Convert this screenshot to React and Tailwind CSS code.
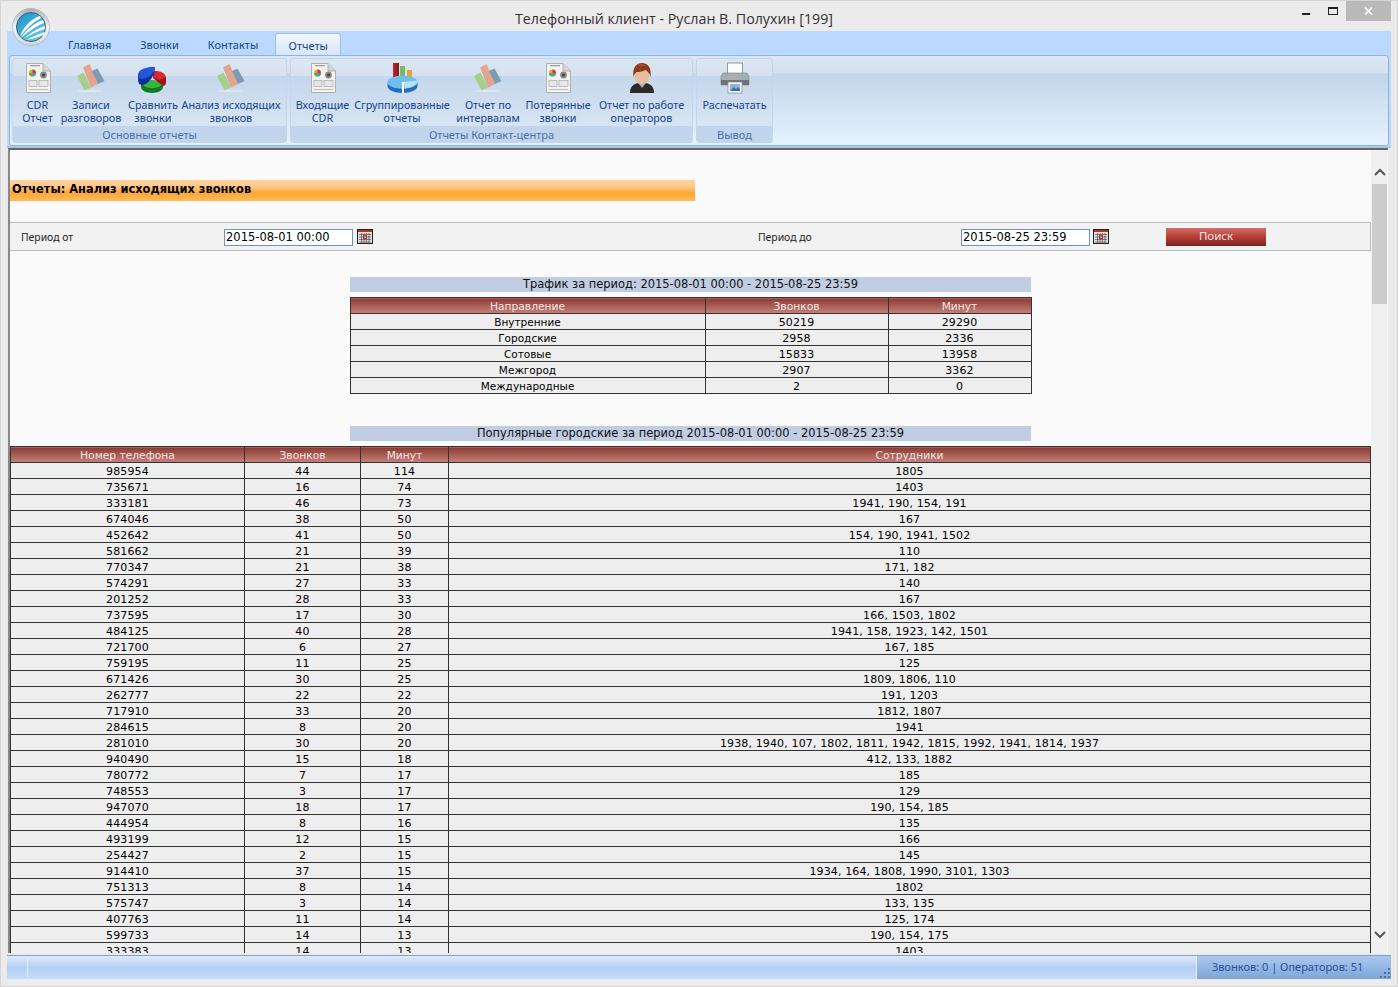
import React from "react";

const ribbonFont = { fontFamily: '"Noto Sans", sans-serif' };
const dejavu = { fontFamily: '"DejaVu Sans", sans-serif' };

function DocIcon() {
  return (
    <svg width="28" height="32" viewBox="0 0 28 32">
      <path d="M2.5 1.5H19L26.500 9V30.500H2.500Z" fill="#f2f2f0" stroke="#b0b0b0" />
      <path d="M19 1.500V9H26.500" fill="#d5d5d5" stroke="#b0b0b0" />
      <rect x="6" y="3" width="10" height="1.200" fill="#999" />
      <circle cx="8.500" cy="11" r="3.400" fill="#e8a43a" />
      <path d="M8.500 7.600a3.400 3.400 0 0 1 3.400 3.400H8.500Z" fill="#d33" />
      <path d="M8.500 11h3.400A3.400 3.400 0 0 1 8.500 14.400Z" fill="#2a9bd8" />
      <path d="M8.500 11v3.400A3.400 3.400 0 0 1 5.100 11Z" fill="#4fae4f" />
      <circle cx="19.500" cy="13" r="3.400" fill="#8a8a8a" />
      <circle cx="19.500" cy="13" r="1.600" fill="#444" />
      <rect x="5" y="18.500" width="8" height="6" fill="#e6e6e6" stroke="#aaa" strokeWidth="0.700" />
      <rect x="15" y="18.500" width="9" height="6" fill="#e6e6e6" stroke="#aaa" strokeWidth="0.700" />
      <rect x="5" y="27" width="19" height="1" fill="#bbb" />
    </svg>
  );
}

function BooksIcon() {
  return (
    <svg width="30" height="30" viewBox="0 0 30 30" className="mt-[1px]">
      <ellipse cx="14" cy="28" rx="13" ry="1" fill="#dfe7f0" />
      <path d="M1 13 7.500 9.500 15 24.500 8.500 27.500Z" fill="#a6cf8b" />
      <path d="M7 4.500 13.500 1 22 21 15 24.500Z" fill="#e3a490" />
      <path d="M16 8 21.500 5.500 28.500 18 22 21Z" fill="#7d9bb3" />
    </svg>
  );
}

function PieIcon() {
  return (
    <svg width="30" height="28" viewBox="0 0 30 28" className="mt-[4px] ml-[-3px]">
      <path d="M4 17v4c0 3 5 6 11 6s11-3 11-6v-4Z" fill="#0c7a20" />
      <path d="M4 17c3-2 7-3 11-3s8 1 11 3c-1 3-6 5-11 5S6 20 4 17Z" fill="#35b53f" />
      <path d="M16 12 V5c6 0 12 2 13 7v5c0 2-2 3-3 3Z" fill="#a50f17" />
      <path d="M16 11 18 5c6 0 10 2 11 6.500L22 14Z" fill="#d8272f" />
      <path d="M1 10c0 1 0 6 1 8l3 1c3 0 7-3 9-6l3-5 1-7C10 1 1 4 1 10Z" fill="#0f2f96" />
      <path d="M1 9c0 2 1 3 3 4 4 0 8-2 10-4l3-3 1-5C10 1 1 3 1 9Z" fill="#2058d8" />
    </svg>
  );
}

function GroupIcon() {
  return (
    <svg width="31" height="32" viewBox="0 0 31 32">
      <defs>
        <linearGradient id="redbar" x1="0" y1="0" x2="1" y2="0">
          <stop offset="0" stopColor="#c8232a" />
          <stop offset="1" stopColor="#7e1a1c" />
        </linearGradient>
      </defs>
      <rect x="6" y="1" width="6" height="14" fill="url(#redbar)" />
      <rect x="13" y="4" width="5" height="11" fill="#79b864" />
      <rect x="20" y="8" width="5" height="7" fill="#eca22c" />
      <ellipse cx="15.500" cy="20" rx="15" ry="6.500" fill="#6fbef0" />
      <path d="M.5 20v4c0 4 7 7 15 7s15-3 15-7v-4c0 4-7 6.500-15 6.500S.5 24 .5 20Z" fill="#1f6fbd" />
      <path d="M17 20 30 18.500c1 3-4 7-12 8Z" fill="#b9e0f7" />
      <path d="M15 20 17 20 17 31 15 31Z" fill="#fff" />
    </svg>
  );
}

function PersonIcon() {
  return (
    <svg width="26" height="32" viewBox="0 0 26 32">
      <path d="M1 31c0-6 3-9 8-10h8c5 1 8 4 8 10Z" fill="#2b2b2b" />
      <path d="M9 21l4 5 4-5Z" fill="#9fb0bf" />
      <ellipse cx="13" cy="14" rx="7.500" ry="8.500" fill="#e8bd9d" />
      <path d="M4.500 15C3 5 8 1 13 1s10 4 8.500 14c-1-4-3-6-5-7-4 2-8 2-9 2-1.500 1-2.500 3-3 5Z" fill="#8c3a1a" />
      <path d="M8 3c3-1.500 7-1 9 1-3 0-6 0-9-1Z" fill="#b4562a" />
    </svg>
  );
}

function PrinterIcon() {
  return (
    <svg width="30" height="32" viewBox="0 0 30 32">
      <rect x="7.500" y="1" width="15" height="11" fill="#fbfbfb" stroke="#9a9a9a" />
      <path d="M3 11h24l2 3v9H1v-9Z" fill="#a8adb1" stroke="#7d8184" strokeWidth="0.600" />
      <rect x="1" y="18" width="28" height="5" fill="#6f7377" />
      <rect x="22" y="13" width="3" height="1.500" fill="#66c2ee" />
      <rect x="8" y="20" width="14" height="11" fill="#fff" stroke="#889" strokeWidth="0.800" />
      <rect x="10" y="22" width="10" height="7" fill="#8fb4dc" />
      <path d="M10 29l4-4 2 2 2-2 2 2v2Z" fill="#3f6ea5" />
    </svg>
  );
}

function Logo() {
  return (
    <svg width="38" height="38" viewBox="0 0 38 38">
      <defs>
        <linearGradient id="ring" x1="0" y1="0" x2="0" y2="1">
          <stop offset="0" stopColor="#a9b0b5" />
          <stop offset="0.500" stopColor="#f3f4f5" />
          <stop offset="1" stopColor="#d3d7da" />
        </linearGradient>
        <linearGradient id="disc" x1="0" y1="0" x2="0.800" y2="1">
          <stop offset="0" stopColor="#1f8fc4" />
          <stop offset="1" stopColor="#63cdec" />
        </linearGradient>
      </defs>
      <circle cx="19" cy="19" r="18.500" fill="url(#ring)" stroke="#a0a7ac" strokeWidth="0.600" />
      <circle cx="19" cy="19" r="14.500" fill="url(#disc)" stroke="#3b5566" strokeWidth="0.900" />
      <path d="M8 29C11 19 19 11 28 8l1 2C21 14 14 21 8 29Z" fill="#fff" />
      <path d="M9 30C14 22 22 15 31 12l1 3C24 18 16 24 9 30Z" fill="#fff" />
      <path d="M11 31C17 26 24 21 33 18l0 3C26 23 18 27 11 31Z" fill="#fff" />
      <path d="M14 32C20 29 26 26 33 24l-1 3C26 29 20 31 14 32Z" fill="#fff" />
    </svg>
  );
}

function CalendarIcon() {
  return (
    <svg width="16" height="15" viewBox="0 0 16 15" className="shrink-0">
      <rect x="0.500" y="0.500" width="15" height="14" fill="#e2e2e2" stroke="#1f1f1f" />
      <rect x="1" y="1" width="14" height="2" fill="#b5332f" />
      <path d="M2 5.500h12M2 8h12M2 10.500h12M2 13h12M4.500 4v10M7 4v10M9.500 4v10M12 4v10" stroke="#5f5f5f" strokeWidth="0.800" fill="none" />
      <rect x="6.500" y="6.500" width="3" height="3" fill="none" stroke="#c22" strokeWidth="0.900" />
    </svg>
  );
}

function RibbonButton({ icon, lines, w }) {
  return (
    <div className={`flex flex-col items-center shrink-0 ${w}`}>
      <div className="h-[38px] flex items-start justify-center pt-[3px]">{icon}</div>
      <div className="text-[10.800px] leading-[13px] text-[#15428b] text-center whitespace-nowrap mt-[1px]" style={ribbonFont}>
        {lines.map((l) => (
          <div key={l}>{l}</div>
        ))}
      </div>
    </div>
  );
}

function RibbonGroup({ title, w, children }) {
  return (
    <div className={`${w} shrink-0 h-[85px] rounded-[3px] border border-[#c3d6ec] flex flex-col overflow-hidden bg-[linear-gradient(180deg,#dbe6f3_0%,#d6e2f0_20%,#c5d7ec_21%,#dde9f5_100%)]`}>
      <div className="h-[68px] flex">{children}</div>
      <div className="h-[16px] bg-[#c1d6ec] text-[11px] leading-[17px] text-[#4a6fa8] text-center" style={ribbonFont}>
        {title}
      </div>
    </div>
  );
}

const trafficRows = [
  ["Внутренние", "50219", "29290"],
  ["Городские", "2958", "2336"],
  ["Сотовые", "15833", "13958"],
  ["Межгород", "2907", "3362"],
  ["Международные", "2", "0"],
];

const popularRows = [
  ["985954", "44", "114", "1805"],
  ["735671", "16", "74", "1403"],
  ["333181", "46", "73", "1941, 190, 154, 191"],
  ["674046", "38", "50", "167"],
  ["452642", "41", "50", "154, 190, 1941, 1502"],
  ["581662", "21", "39", "110"],
  ["770347", "21", "38", "171, 182"],
  ["574291", "27", "33", "140"],
  ["201252", "28", "33", "167"],
  ["737595", "17", "30", "166, 1503, 1802"],
  ["484125", "40", "28", "1941, 158, 1923, 142, 1501"],
  ["721700", "6", "27", "167, 185"],
  ["759195", "11", "25", "125"],
  ["671426", "30", "25", "1809, 1806, 110"],
  ["262777", "22", "22", "191, 1203"],
  ["717910", "33", "20", "1812, 1807"],
  ["284615", "8", "20", "1941"],
  ["281010", "30", "20", "1938, 1940, 107, 1802, 1811, 1942, 1815, 1992, 1941, 1814, 1937"],
  ["940490", "15", "18", "412, 133, 1882"],
  ["780772", "7", "17", "185"],
  ["748553", "3", "17", "129"],
  ["947070", "18", "17", "190, 154, 185"],
  ["444954", "8", "16", "135"],
  ["493199", "12", "15", "166"],
  ["254427", "2", "15", "145"],
  ["914410", "37", "15", "1934, 164, 1808, 1990, 3101, 1303"],
  ["751313", "8", "14", "1802"],
  ["575747", "3", "14", "133, 135"],
  ["407763", "11", "14", "125, 174"],
  ["599733", "14", "13", "190, 154, 175"],
  ["333383", "14", "13", "1403"],
];

const th = "h-[16px] p-0 pt-[2px] text-[10.700px] font-normal text-[#f3e6e3] border border-[#333] text-center leading-[13px] bg-gradient-to-b from-[#8c3a32] to-[#c5827a]";
const td = "h-[16px] p-0 pt-[2px] font-normal text-black border border-[#333] text-center leading-[13px]";
const numeric = "text-[11px] tracking-[0.130px]";
const word = "text-[10.500px]";

function SectionTitle({ children }) {
  return (
    <div className="w-[681px] mx-auto h-[15px] bg-[#c0cde2] text-[11.450px] leading-[15px] text-center text-[#111]" style={dejavu}>
      {children}
    </div>
  );
}

export default function App() {
  return (
    <div className="w-[1398px] h-[987px] bg-[#ebebeb] border border-[#d4d4d4] flex flex-col relative overflow-hidden">
      <div className="absolute left-[11px] top-[7px] z-10">
        <Logo />
      </div>

      <div className="h-[30px] shrink-0 flex relative">
        <div className="flex-1 text-center text-[14.250px] leading-[35px] text-[#333] pr-[50px]" style={{ fontFamily: '"Open Sans", sans-serif' }}>
          Телефонный клиент - Руслан В. Полухин [199]
        </div>
        <div className="absolute right-[6px] top-0 flex items-start">
          <div className="w-[27px] h-[20px] flex items-start justify-center pt-[12px]">
            <div className="w-[8px] h-[2px] bg-[#222]" />
          </div>
          <div className="w-[27px] h-[20px] flex items-start justify-center pt-[6px]">
            <div className="w-[10px] h-[8px] border border-[#222] border-t-2" />
          </div>
          <div className="w-[45px] h-[20px] bg-[#b9b9b9] flex items-center justify-center">
            <svg width="9" height="8" viewBox="0 0 9 8">
              <path d="M1 .5 8 7.500M8 .5 1 7.500" stroke="#fff" strokeWidth="1.600" />
            </svg>
          </div>
        </div>
      </div>

      <div className="w-[1384px] ml-[6px] flex flex-col flex-1 min-h-0">
        <div className="shrink-0 bg-[#bbd9ff] flex flex-col">
          <div className="h-[24px] flex items-end pl-[46.500px] text-[11px] text-[#15428b]" style={ribbonFont}>
            <div className="h-[24px] leading-[28px] px-[14.500px] whitespace-nowrap">Главная</div>
            <div className="h-[24px] leading-[28px] px-[14.500px] whitespace-nowrap">Звонки</div>
            <div className="h-[24px] leading-[28px] px-[14.500px] whitespace-nowrap">Контакты</div>
            <div className="h-[22px] w-[66px] ml-[2.500px] rounded-t-[3px] border border-b-0 border-[#9fc0e6] bg-gradient-to-b from-[#f2f7fd] to-[#d6e5f5] text-center leading-[24px]">Отчеты</div>
          </div>

          <div className="h-[91px] mx-[2px] rounded-[3px] border border-[#8cb4e2] bg-[linear-gradient(180deg,#dbe6f3_0%,#d5e1ef_19%,#c3d5eb_20%,#e4f3fe_100%)] pl-[2px] pt-[2px] flex gap-[3px]">
            <RibbonGroup title="Основные отчеты" w="w-[275px]">
              <RibbonButton icon={<DocIcon />} lines={["CDR", "Отчет"]} w="w-[49px]" />
              <RibbonButton icon={<BooksIcon />} lines={["Записи", "разговоров"]} w="w-[58px]" />
              <RibbonButton icon={<PieIcon />} lines={["Сравнить", "звонки"]} w="w-[66px]" />
              <RibbonButton icon={<BooksIcon />} lines={["Анализ исходящих", "звонков"]} w="w-[90px]" />
            </RibbonGroup>
            <RibbonGroup title="Отчеты Контакт-центра" w="w-[403px]">
              <RibbonButton icon={<DocIcon />} lines={["Входящие", "CDR"]} w="w-[63px]" />
              <RibbonButton icon={<GroupIcon />} lines={["Сгруппированные", "отчеты"]} w="w-[96px]" />
              <RibbonButton icon={<BooksIcon />} lines={["Отчет по", "интервалам"]} w="w-[76px]" />
              <RibbonButton icon={<DocIcon />} lines={["Потерянные", "звонки"]} w="w-[64px]" />
              <RibbonButton icon={<PersonIcon />} lines={["Отчет по работе", "операторов"]} w="w-[103px]" />
            </RibbonGroup>
            <RibbonGroup title="Вывод" w="w-[77px]">
              <RibbonButton icon={<PrinterIcon />} lines={["Распечатать"]} w="w-[75px]" />
            </RibbonGroup>
          </div>
          <div className="h-[2px] bg-[#a9c6ea]" />
        </div>

        <div className="ml-[1px] w-[1380px] h-[805px] shrink-0 border-t-2 border-t-[#666] border-l-2 border-l-[#888] bg-[#fafafa] flex overflow-hidden">
          <div className="w-[1361px] shrink-0 overflow-hidden" style={dejavu}>
            <div className="mt-[30px] w-[685px] h-[21px] bg-[linear-gradient(180deg,#ffd39f_0%,#ffc787_35%,#ffa733_60%,#ffbb5a_100%)] text-[11.400px] font-bold leading-[19px] pl-[2px] text-black">
              Отчеты: Анализ исходящих звонков
            </div>

            <div className="mt-[21px] h-[29px] bg-[#f2f2f2] border border-[#bcbcbc] border-l-0 flex items-center text-[10.400px] text-[#222]" style={ribbonFont}>
              <div className="w-[214px] pl-[11px] shrink-0 pt-[3px]">Период от</div>
              <input readOnly value="2015-08-01 00:00" className="w-[129px] h-[17px] mt-[1px] border border-[#6d94c8] bg-white px-[1px] pt-[1px] text-[11.500px] text-black outline-none" style={dejavu} />
              <div className="ml-[4px]"><CalendarIcon /></div>
              <div className="w-[385px] shrink-0" />
              <div className="w-[203px] shrink-0 pt-[3px]">Период до</div>
              <input readOnly value="2015-08-25 23:59" className="w-[129px] h-[17px] mt-[1px] border border-[#6d94c8] bg-white px-[1px] pt-[1px] text-[11.500px] text-black outline-none" style={dejavu} />
              <div className="ml-[3px]"><CalendarIcon /></div>
              <div className="ml-[57px] mt-[1px] w-[100px] h-[18px] bg-gradient-to-b from-[#d0706a] via-[#b83c34] to-[#7a2620] text-[#f5e6e4] text-center text-[11.500px] leading-[16px]">Поиск</div>
            </div>

            <div className="mt-[26px]">
              <SectionTitle>Трафик за период: 2015-08-01 00:00 - 2015-08-25 23:59</SectionTitle>
            </div>
            <table className="mt-[5px] w-[681px] mx-auto border-collapse table-fixed bg-[#eeeeee]">
              <colgroup>
                <col className="w-[355px]" />
                <col className="w-[183px]" />
                <col className="w-[143px]" />
              </colgroup>
              <thead>
                <tr>
                  <th className={th}>Направление</th>
                  <th className={th}>Звонков</th>
                  <th className={th}>Минут</th>
                </tr>
              </thead>
              <tbody>
                {trafficRows.map((r) => (
                  <tr key={r[0]}>
                    {r.map((c, i) => (
                      <td key={i} className={`${td} ${i === 0 ? word : numeric}`}>{c}</td>
                    ))}
                  </tr>
                ))}
              </tbody>
            </table>

            <div className="mt-[32px]">
              <SectionTitle>Популярные городские за период 2015-08-01 00:00 - 2015-08-25 23:59</SectionTitle>
            </div>
            <table className="mt-[5px] w-[1361px] border-collapse table-fixed bg-[#eeeeee]">
              <colgroup>
                <col className="w-[234px]" />
                <col className="w-[116px]" />
                <col className="w-[88px]" />
                <col />
              </colgroup>
              <thead>
                <tr>
                  <th className={th}>Номер телефона</th>
                  <th className={th}>Звонков</th>
                  <th className={th}>Минут</th>
                  <th className={th}>Сотрудники</th>
                </tr>
              </thead>
              <tbody>
                {popularRows.map((r) => (
                  <tr key={r[0]}>
                    {r.map((c, i) => (
                      <td key={i} className={`${td} ${numeric}`}>{c}</td>
                    ))}
                  </tr>
                ))}
              </tbody>
            </table>
          </div>

          <div className="w-[16px] shrink-0 bg-[#f0f0f0] flex flex-col">
            <div className="h-[34px] flex items-center justify-center pt-[10px] pl-[1px]">
              <svg width="12" height="8" viewBox="0 0 12 8"><path d="M1 7 6 2l5 5" stroke="#555" strokeWidth="2" fill="none" /></svg>
            </div>
            <div className="h-[120px] bg-[#cdcdcd] ml-[1px]" />
            <div className="flex-1" />
            <div className="h-[24px] flex items-start justify-center pt-[2px] pl-[1px]">
              <svg width="12" height="8" viewBox="0 0 12 8"><path d="M1 1l5 5 5-5" stroke="#555" strokeWidth="2" fill="none" /></svg>
            </div>
          </div>
        </div>

        <div className="h-[24px] shrink-0 mt-[2px] border-t border-[#7da3cf] bg-gradient-to-b from-[#dceafb] via-[#b4cff2] to-[#c5dcfa] flex relative">
          <div className="w-[21px] border-r border-[#e6f0fb] my-[2px]" />
          <div className="flex-1" />
          <div className="w-[195px] border-l border-[#e6f0fb] bg-gradient-to-b from-[#a9c8ee] to-[#7fa6d8] text-[11px] leading-[21px] text-[#2d4f9a] pl-[15px]" style={ribbonFont}>
            Звонков: 0 | Операторов: 51
          </div>
          <div className="absolute right-[1px] bottom-[1px] w-[11px] h-[11px]">
            <svg width="11" height="11" viewBox="0 0 11 11">
              <path d="M9 1h2v2H9ZM5 5h2v2H5ZM9 5h2v2H9ZM1 9h2v2H1ZM5 9h2v2H5ZM9 9h2v2H9Z" fill="#4a6fa8" />
            </svg>
          </div>
        </div>
      </div>
    </div>
  );
}
